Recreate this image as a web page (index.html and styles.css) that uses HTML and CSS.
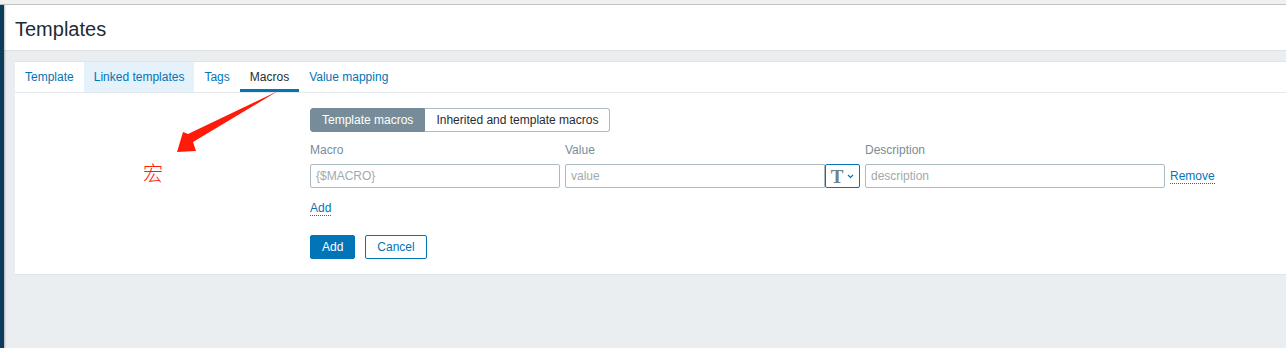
FILE: index.html
```html
<!DOCTYPE html>
<html lang="en">
<head>
    <meta charset="UTF-8">
    <title>Templates</title>
    <link rel="stylesheet" href="styles.css">
</head>
<body>
    <div class="topbar"></div>
    <div class="layout">
        <aside class="sidebar"></aside>
        <main class="main">
            <header class="page-header">
                <h1>Templates</h1>
            </header>
            <div class="page-body">
                <section class="card">
                    <nav class="tabs">
                        <a class="tab">Template</a>
                        <a class="tab tab-hover">Linked templates</a>
                        <a class="tab">Tags</a>
                        <a class="tab tab-active">Macros</a>
                        <a class="tab">Value mapping</a>
                    </nav>
                    <div class="tab-content">
                        <div class="segmented">
                            <span class="segment segment-on">Template macros</span>
                            <span class="segment">Inherited and template macros</span>
                        </div>

                        <div class="macro-table">
                            <div class="col-label">Macro</div>
                            <div class="col-label">Value</div>
                            <div class="col-label">Description</div>
                            <div></div>

                            <input class="field" type="text" placeholder="{$MACRO}">
                            <div class="value-group">
                                <input class="field" type="text" placeholder="value">
                                <button class="type-btn" type="button">
                                    <span class="type-t">T</span>
                                    <svg width="7" height="5" viewBox="0 0 7 5"><path d="M1 1 L3.5 3.5 L6 1" fill="none" stroke="#0275b8" stroke-width="1.2"/></svg>
                                </button>
                            </div>
                            <input class="field" type="text" placeholder="description">
                            <a class="link">Remove</a>
                        </div>

                        <div class="add-row"><a class="link">Add</a></div>

                        <div class="actions">
                            <button class="btn btn-primary" type="button">Add</button>
                            <button class="btn btn-alt" type="button">Cancel</button>
                        </div>
                    </div>
                </section>
            </div>
        </main>
    </div>

    <!-- screenshot annotation -->
    <svg class="note-arrow" width="1286" height="348" viewBox="0 0 1286 348">
        <polygon points="278,91 188,134 183,132 177,152 196,151 193,142" fill="#ff1a0a"/>
    </svg>
    <span class="note-text">宏</span>
</body>
</html>
```

FILE: styles.css
```css
* {
    box-sizing: border-box;
}
body {
    margin: 0;
    font-family: "Liberation Sans", Arial, sans-serif;
    font-size: 12px;
    color: #1f2c33;
    background-color: #ebeef0;
    height: 348px;
    overflow: hidden;
    position: relative;
}
.topbar {
    height: 5px;
    background-color: #f0f0f0;
    border-bottom: 1px solid #c4c4c4;
}
.layout {
    display: flex;
    height: 343px;
}
.sidebar {
    width: 4px;
    flex: none;
    background-color: #0c3b5c;
    box-shadow: 1px 0 2px rgba(0, 0, 0, 0.25);
    z-index: 1;
}
.main {
    flex: 1;
    min-width: 0;
}
.page-header {
    height: 46px;
    background-color: #fff;
    border-bottom: 1px solid #dde2e5;
    padding-left: 11px;
    display: flex;
    align-items: center;
}
.page-header h1 {
    margin: 0;
    font-size: 20px;
    font-weight: normal;
    color: #1f2c33;
    padding-top: 3px;
}
.page-body {
    padding: 10px 0 0 11px;
}
.card {
    background-color: #fff;
    border-top: 1px solid #dfe4e7;
    border-bottom: 1px solid #dfe4e7;
}
.tabs {
    display: flex;
    height: 31px;
    border-bottom: 1px solid #e6e9eb;
}
.tab {
    padding: 0 10px;
    line-height: 30px;
    color: #0275b8;
    cursor: pointer;
}
.tab-hover {
    background-color: #e5f1fb;
}
.tab-active {
    color: #1f2c33;
    box-shadow: inset 0 -3px 0 #0275b8;
}
.tab-content {
    padding: 15px 0 15px 295px;
}
.segmented {
    display: inline-flex;
    height: 24px;
}
.segment {
    display: flex;
    align-items: center;
    padding: 0 11px;
    border: 1px solid #acbbc2;
    border-left: none;
    border-radius: 0 3px 3px 0;
    color: #1f2c33;
}
.segment-on {
    background-color: #768d99;
    border-color: #768d99;
    color: #fff;
    border-radius: 3px 0 0 3px;
    border-left: 1px solid #768d99;
}
.macro-table {
    display: grid;
    grid-template-columns: 250px 295px 300px auto;
    column-gap: 5px;
    align-items: center;
    margin-top: 10px;
}
.col-label {
    color: #768d99;
    line-height: 16px;
    margin-bottom: 6px;
}
.field {
    height: 24px;
    width: 100%;
    border: 1px solid #acbbc2;
    border-radius: 2px;
    padding: 0 5px;
    font-family: inherit;
    font-size: 12px;
    color: #1f2c33;
    outline: none;
}
.field::placeholder {
    color: #a2aaae;
}
.value-group {
    display: flex;
}
.value-group .field {
    width: 260px;
    border-radius: 2px 0 0 2px;
}
.type-btn {
    width: 35px;
    height: 24px;
    flex: none;
    border: 1px solid #0275b8;
    border-radius: 2px;
    background-color: #fff;
    display: flex;
    align-items: center;
    justify-content: center;
    gap: 4px;
    padding: 0;
}
.type-t {
    font-family: "Liberation Serif", "Times New Roman", serif;
    font-weight: bold;
    font-size: 19px;
    color: #6f818a;
    line-height: 1;
}
.link {
    color: #0275b8;
    border-bottom: 1px dotted #0275b8;
    cursor: pointer;
    justify-self: start;
    line-height: 14px;
}
.add-row {
    margin-top: 12px;
    line-height: 16px;
}
.actions {
    display: flex;
    gap: 10px;
    margin-top: 19px;
}
.btn {
    height: 24px;
    padding: 0 11px;
    border-radius: 2px;
    font-family: inherit;
    font-size: 12px;
    cursor: pointer;
}
.btn-primary {
    background-color: #0275b8;
    border: 1px solid #0275b8;
    color: #fff;
}
.btn-alt {
    background-color: #fff;
    border: 1px solid #0275b8;
    color: #0275b8;
}
.note-arrow {
    position: absolute;
    left: 0;
    top: 0;
    pointer-events: none;
}
.note-text {
    position: absolute;
    left: 143px;
    top: 161px;
    font-family: "Noto Sans CJK SC", sans-serif;
    font-size: 20px;
    font-weight: 300;
    color: #ff1a0a;
    line-height: 24px;
}
```
